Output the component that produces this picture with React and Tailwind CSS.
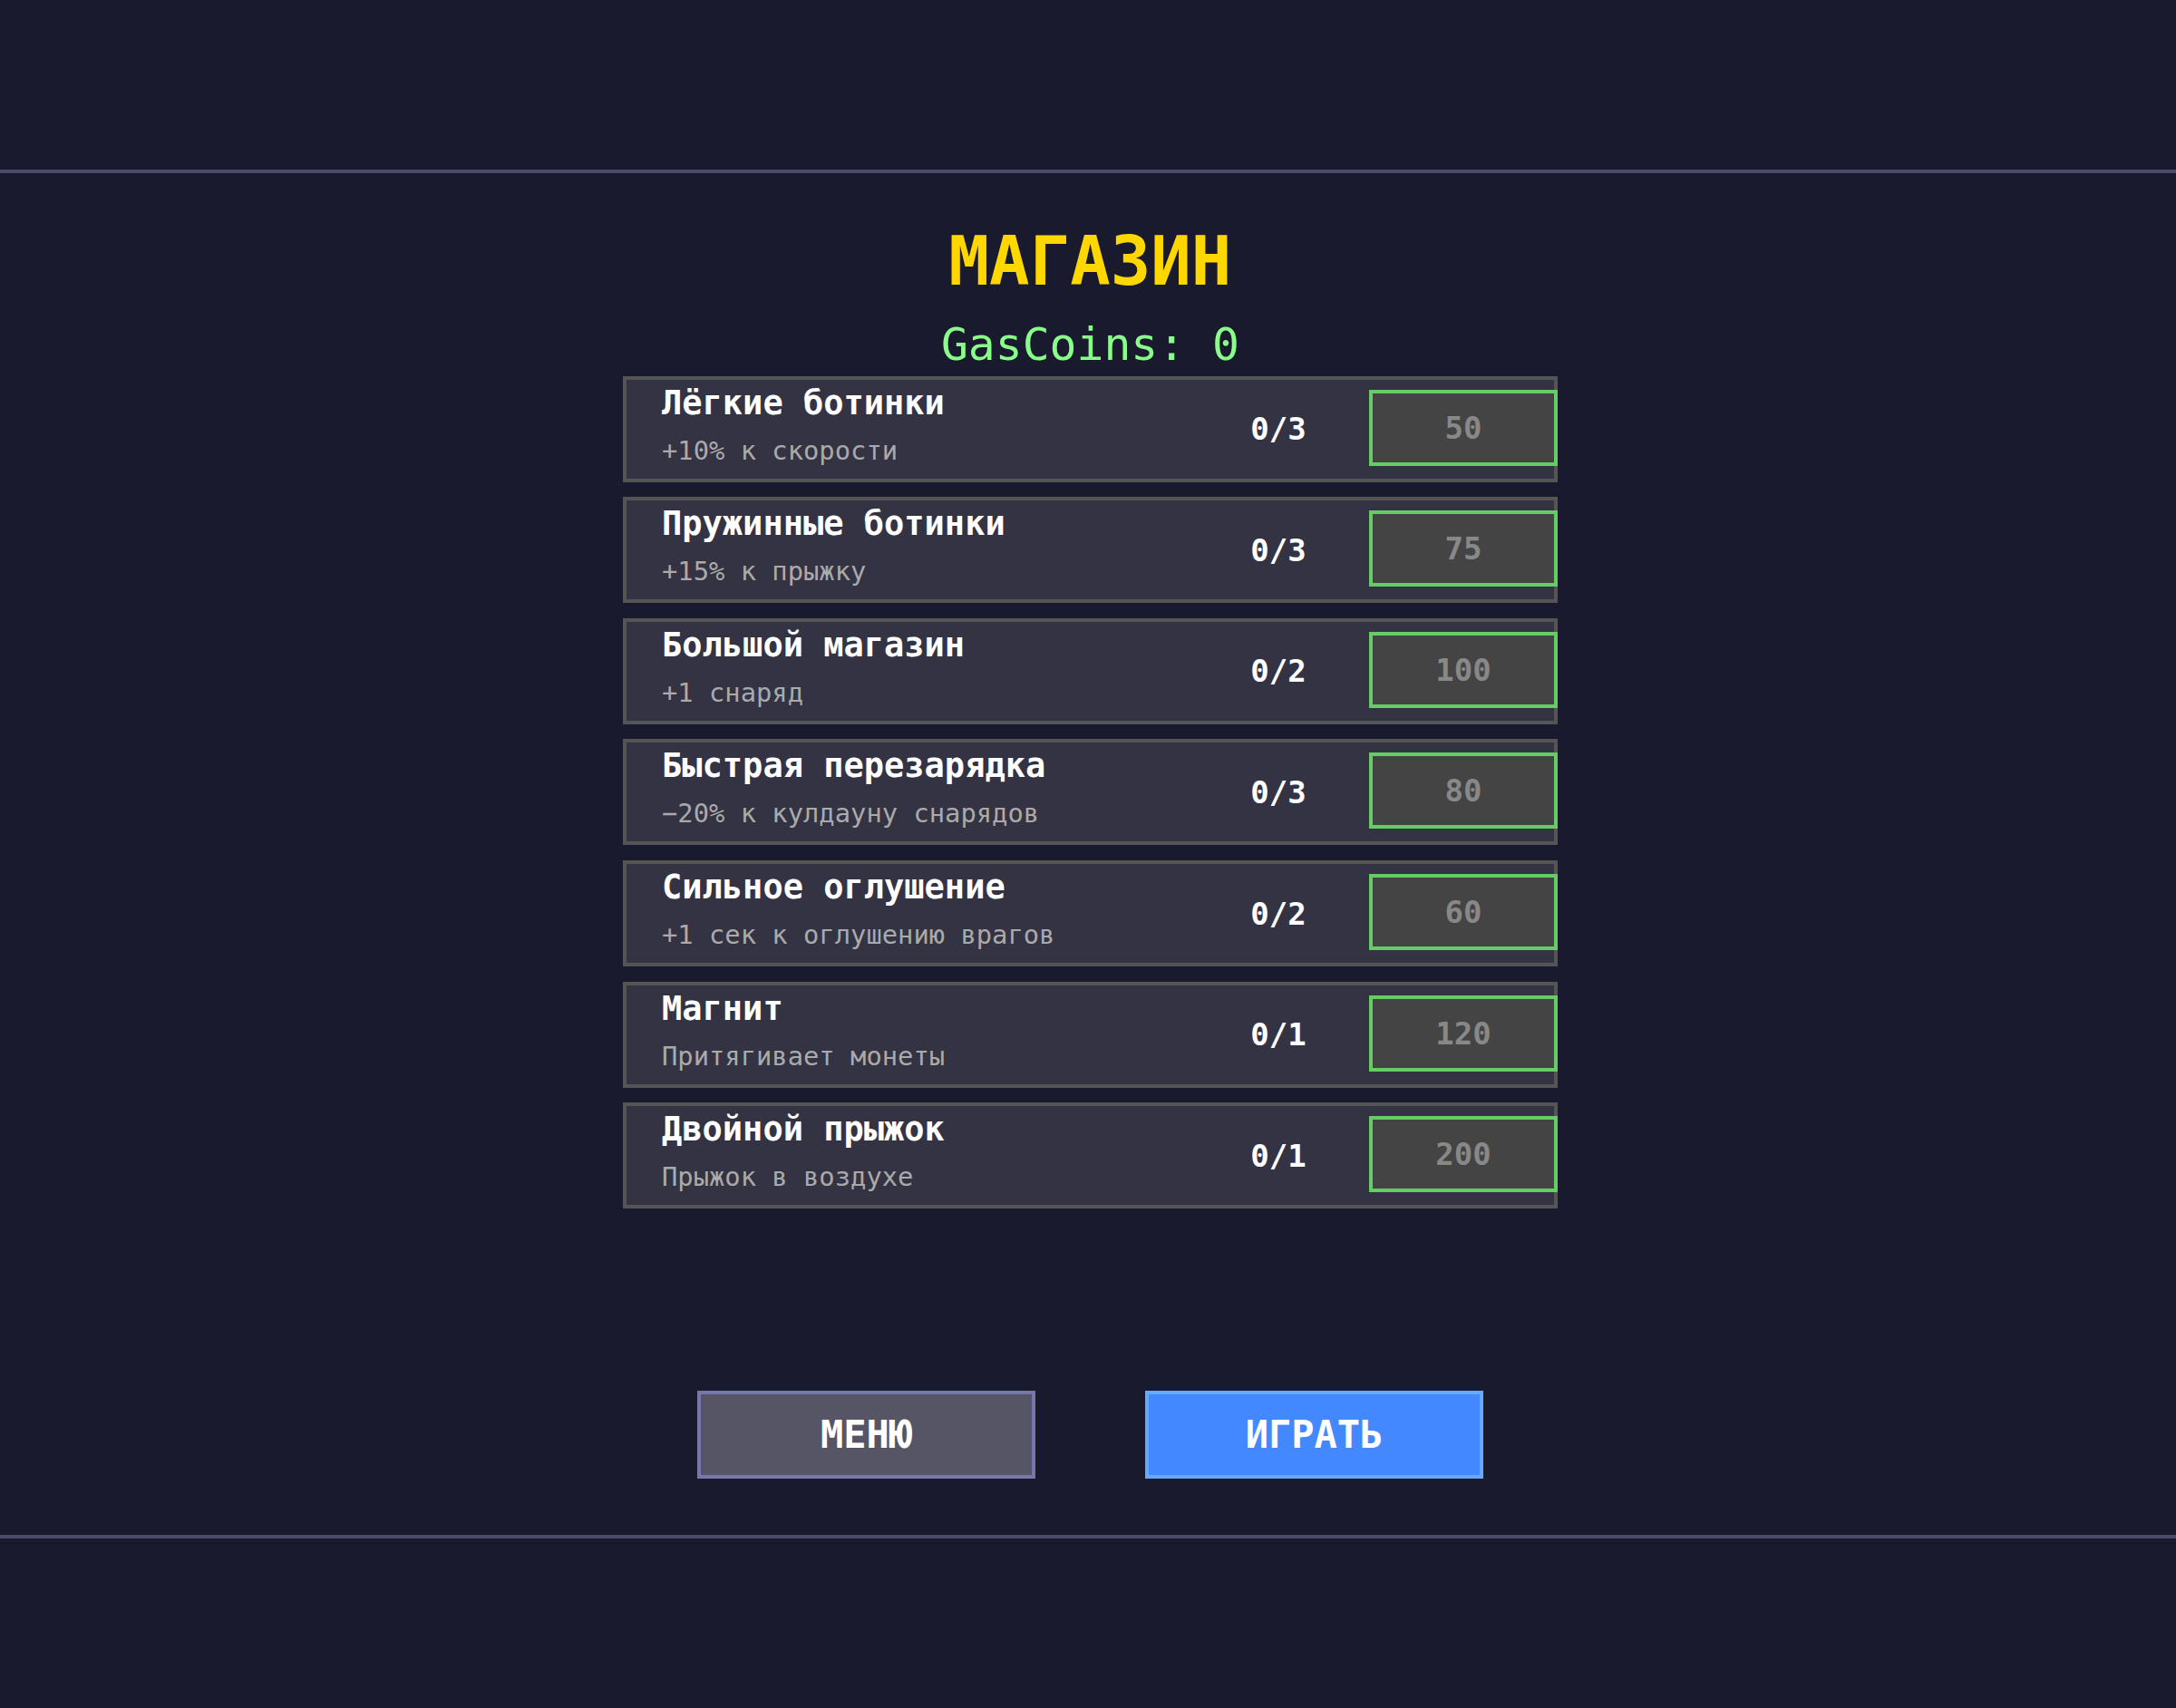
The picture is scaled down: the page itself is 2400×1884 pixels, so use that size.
import React from 'react';

const upgrades = [
  { name: 'Лёгкие ботинки', desc: '+10% к скорости', level: '0/3', price: 50 },
  { name: 'Пружинные ботинки', desc: '+15% к прыжку', level: '0/3', price: 75 },
  { name: 'Большой магазин', desc: '+1 снаряд', level: '0/2', price: 100 },
  { name: 'Быстрая перезарядка', desc: '−20% к кулдауну снарядов', level: '0/3', price: 80 },
  { name: 'Сильное оглушение', desc: '+1 сек к оглушению врагов', level: '0/2', price: 60 },
  { name: 'Магнит', desc: 'Притягивает монеты', level: '0/1', price: 120 },
  { name: 'Двойной прыжок', desc: 'Прыжок в воздухе', level: '0/1', price: 200 },
];

function UpgradeRow({ item }) {
  return (
    <div className="flex h-[117px] border-4 border-[#555555] bg-[#333344]">
      {/* Name + description */}
      <div className="flex-1 pl-[39px] pt-[7px]">
        <p className="text-[37px] leading-none font-bold text-white">{item.name}</p>
        <p className="mt-[20px] text-[28.8px] leading-none text-[#aaaaaa]">{item.desc}</p>
      </div>

      {/* Level */}
      <div className="w-[200px] flex items-center justify-center text-[34px] leading-none font-bold text-white">
        {item.level}
      </div>

      {/* Buy button */}
      <button className="-mr-[4px] mt-[11px] w-[208px] h-[84px] self-start flex items-center justify-center border-4 border-[#66cc66] bg-[#444444] text-[34px] leading-none font-bold text-[#888888]">
        {item.price}
      </button>
    </div>
  );
}

export default function App() {
  const coins = 0;

  return (
    <div className="w-full h-[1884px] flex flex-col bg-[#1a1a2e] font-['DejaVu_Sans_Mono',monospace] overflow-hidden">
      <div className="h-[187px]" />
      <div className="h-[4px] bg-[#4a4a6a]" />

      <main className="h-[1502px]">
        <div className="ml-[687px] w-[1031px] pt-[60px] flex flex-col">
          <h1 className="text-center text-[74px] leading-none font-bold text-[#ffd700]">МАГАЗИН</h1>
          <p className="mt-[31px] text-center text-[49.7px] leading-none text-[#88ff88]">GasCoins: {coins}</p>

          <div className="mt-[9px] flex flex-col gap-[16.6px]">
            {upgrades.map((u) => (
              <UpgradeRow key={u.name} item={u} />
            ))}
          </div>

          <div className="mt-[201px] flex justify-center gap-[121px]">
            <button className="w-[373px] h-[97px] flex items-center justify-center border-4 border-[#7777aa] bg-[#555566] text-[42px] leading-none font-bold text-white">
              МЕНЮ
            </button>
            <button className="w-[373px] h-[97px] flex items-center justify-center border-4 border-[#66aaff] bg-[#4488ff] text-[42px] leading-none font-bold text-white">
              ИГРАТЬ
            </button>
          </div>
        </div>
      </main>

      <div className="h-[4px] bg-[#4a4a6a]" />
      <div className="flex-1" />
    </div>
  );
}
